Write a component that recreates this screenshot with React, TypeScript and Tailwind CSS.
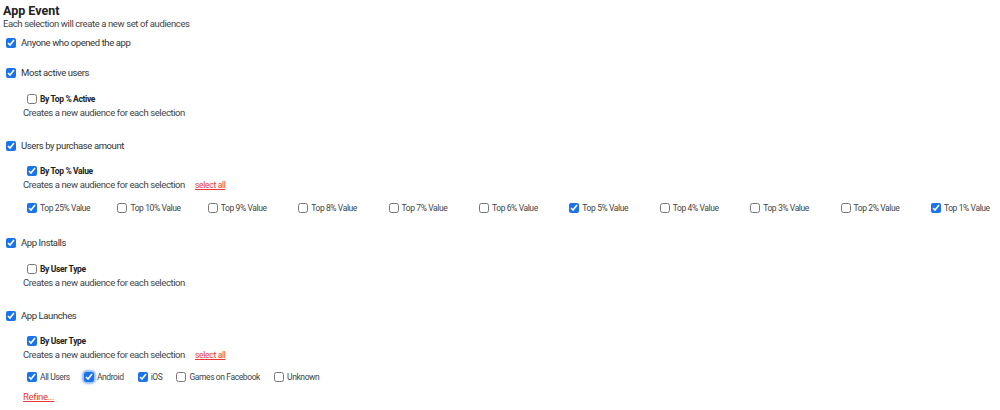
import React from "react";

const F = { fontFamily: "Roboto, 'Liberation Sans', sans-serif" };

function Box({ checked, focus }: { checked?: boolean; focus?: boolean }) {
  const input = (
    <input
      type="checkbox"
      defaultChecked={checked}
      className="m-0 w-[10px] h-[10px] shrink-0 block accent-[#1a73e8]"
    />
  );
  if (focus)
    return (
      <span className="block rounded-[3px] shadow-[0_0_2px_2px_rgba(66,133,244,0.55)]">{input}</span>
    );
  return input;
}

function Main({ label, className = "" }: { label: string; className?: string }) {
  return (
    <div className={"flex items-center h-4 pl-[6px] " + className}>
      <Box checked />
      <span className="ml-[5px] text-[9.5px] tracking-[-0.4px] text-[#333]">{label}</span>
    </div>
  );
}

function Sub({ label, checked, className = "" }: { label: string; checked?: boolean; className?: string }) {
  return (
    <div className={"flex items-center h-[14px] pl-[27px] " + className}>
      <Box checked={checked} />
      <span className="ml-[3px] text-[8.5px] tracking-[-0.35px] font-bold text-[#222]">{label}</span>
    </div>
  );
}

function Creates({ selectAll }: { selectAll?: boolean }) {
  return (
    <div className="flex items-center h-[14px] pl-[23px]">
      <span className="text-[9.5px] tracking-[-0.4px] text-[#444]">Creates a new audience for each selection</span>
      {selectAll && (
        <span className="ml-[10px] text-[8.5px] tracking-[-0.3px] text-[#e53935] underline">select all</span>
      )}
    </div>
  );
}

function Opt({ label, checked, focus, w }: { label: string; checked?: boolean; focus?: boolean; w?: string }) {
  return (
    <div className={"flex items-center " + (w ?? "")}>
      <Box checked={checked} focus={focus} />
      <span className="ml-[3px] text-[8.5px] tracking-[-0.4px] text-[#444]">{label}</span>
    </div>
  );
}

export default function App() {
  const tops = [
    ["Top 25% Value", true],
    ["Top 10% Value", false],
    ["Top 9% Value", false],
    ["Top 8% Value", false],
    ["Top 7% Value", false],
    ["Top 6% Value", false],
    ["Top 5% Value", true],
    ["Top 4% Value", false],
    ["Top 3% Value", false],
    ["Top 2% Value", false],
    ["Top 1% Value", true],
  ] as const;
  return (
    <div style={F} className="w-[1000px] h-[410px] bg-white overflow-hidden pt-[4px]">
      <div className="pl-[3px] h-[14px] flex items-center text-[12.5px] font-bold text-[#222]">App Event</div>
      <div className="pl-[3px] h-[12px] flex items-center text-[9.5px] tracking-[-0.4px] text-[#444]">
        Each selection will create a new set of audiences
      </div>
      <Main label="Anyone who opened the app" className="mt-[5px]" />
      <Main label="Most active users" className="mt-[14px]" />
      <Sub label="By Top % Active" className="mt-[11px]" />
      <Creates />
      <Main label="Users by purchase amount" className="mt-[18px]" />
      <Sub label="By Top % Value" checked className="mt-[10px]" />
      <Creates selectAll />
      <div className="flex h-4 items-center pl-[27px] mt-[8px]">
        {tops.map(([l, c]) => (
          <Opt key={l} label={l} checked={c} w="w-[90.4px] shrink-0" />
        ))}
      </div>
      <Main label="App Installs" className="mt-[19px]" />
      <Sub label="By User Type" className="mt-[11px]" />
      <Creates />
      <Main label="App Launches" className="mt-[18px]" />
      <Sub label="By User Type" checked className="mt-[10px]" />
      <Creates selectAll />
      <div className="flex h-4 items-center pl-[27px] mt-[7px] gap-[14px]">
        <Opt label="All Users" checked />
        <Opt label="Android" checked focus />
        <Opt label="iOS" checked />
        <Opt label="Games on Facebook" />
        <Opt label="Unknown" />
      </div>
      <div className="pl-[23px] mt-[5px] h-[14px] flex items-center text-[9.5px] tracking-[-0.35px] text-[#e53935] underline">
        Refine...
      </div>
    </div>
  );
}
